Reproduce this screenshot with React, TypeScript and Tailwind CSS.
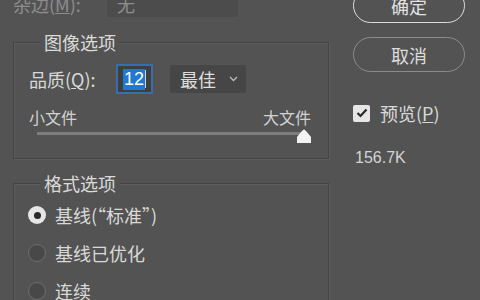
import React from "react";

const font = "font-['Microsoft_YaHei','Noto_Sans_CJK_SC','Noto_Sans',sans-serif]";

function Radio({ checked, label }: { checked?: boolean; label: string }) {
  return (
    <div className="flex items-center h-[20px] shrink-0">
      {checked ? (
        <div className="w-[18px] h-[18px] rounded-full bg-[#e6e6e6] flex items-center justify-center">
          <div className="w-[7px] h-[7px] rounded-full bg-[#2a2a2a]" />
        </div>
      ) : (
        <div className="w-[18px] h-[18px] rounded-full bg-[#484848] border border-[#6e6e6e]" />
      )}
      <span className="ml-[9px] text-[18px] leading-[22px] text-[#d9d9d9]">{label}</span>
    </div>
  );
}

function Group({
  title,
  className,
  children,
}: {
  title: string;
  className: string;
  children: React.ReactNode;
}) {
  return (
    <div
      className={
        "relative shrink-0 ml-[13px] w-[316px] border border-[#444444] shadow-[inset_1px_1px_0_#5c5c5c,1px_1px_0_#5c5c5c] " +
        className
      }
    >
      <div className="absolute left-[26px] top-[-12px] px-[4px] bg-[#535353] text-[18px] leading-[22px] text-[#dadada]">
        {title}
      </div>
      {children}
    </div>
  );
}

export default function App() {
  return (
    <div className={"w-[480px] h-[300px] overflow-hidden bg-[#535353] flex " + font}>
      {/* left column */}
      <div className="w-[340px] flex flex-col shrink-0">
        <div className="mt-[-9px] h-[26px] flex items-center shrink-0">
          <div className="pl-[13px] w-[107px] text-[18px] leading-[22px] text-[#8e8e8e]">
            杂边(<span className="underline">M</span>):
          </div>
          <div className="w-[131px] h-[26px] bg-[#4c4c4c] flex items-center pl-[10px] text-[18px] leading-[22px] text-[#8e8e8e]">
            无
          </div>
        </div>

        <Group title="图像选项" className="mt-[25px] h-[117px] pt-[21px]">
          <div className="flex items-center h-[30px]">
            <div className="pl-[15px] w-[102px] text-[18px] leading-[22px] text-[#d9d9d9]">
              品质(<span className="underline">Q</span>):
            </div>
            <div className="w-[37px] h-[30px] border-2 border-[#3b6ea6] bg-[#3f3f3f] flex items-center pl-[5px]">
              <span className="bg-[#1f78d1] text-white text-[18px] leading-[21px] px-[1px] font-['Liberation_Sans',sans-serif]">
                12
              </span>
              <span className="w-[1px] h-[18px] bg-[#cfcfcf]" />
            </div>
            <div className="ml-[17px] w-[76px] h-[28px] bg-[#464646] flex items-center pl-[10px] pr-[8px] justify-between">
              <span className="text-[18px] leading-[22px] text-[#dedede]">最佳</span>
              <svg width="9" height="6" viewBox="0 0 9 6">
                <path d="M1 1 L4.5 4.5 L8 1" fill="none" stroke="#bdbdbd" strokeWidth="1.3" />
              </svg>
            </div>
          </div>
          <div className="mt-[13px] h-[20px] flex items-center justify-between pl-[15px] pr-[17px] text-[16px] leading-[20px] text-[#d2d2d2]">
            <span>小文件</span>
            <span>大文件</span>
          </div>
          <div className="relative ml-[23px] w-[267px] h-[16px]">
            <div className="absolute left-0 right-0 top-[5px] h-[3px] bg-[#7d7d7d]" />
            <svg
              className="absolute left-[259px] top-[2px]"
              width="16"
              height="15"
              viewBox="0 0 16 15"
            >
              <path d="M1 14 L1 8 Q4 4 7 1 Q8 0 9 1 Q12 4 15 8 L15 14 Z" fill="#f2f2f2" />
            </svg>
          </div>
        </Group>

        <Group title="格式选项" className="mt-[24px] h-[200px] pt-[21px] pl-[14px] flex flex-col gap-[18px]">
          <Radio checked label="基线(“标准”)" />
          <Radio label="基线已优化" />
          <Radio label="连续" />
        </Group>
      </div>

      {/* right column */}
      <div className="ml-[13px] w-[112px] flex flex-col">
        <div className="shrink-0 mt-[-12px] h-[35px] rounded-full border border-[#dcdcdc] flex items-center justify-center text-[18px] leading-[22px] text-[#e2e2e2]">
          确定
        </div>
        <div className="shrink-0 mt-[14px] h-[35px] rounded-full border border-[#8c8c8c] flex items-center justify-center text-[18px] leading-[22px] text-[#dcdcdc]">
          取消
        </div>
        <div className="shrink-0 mt-[30px] flex items-center">
          <div className="w-[17px] h-[17px] rounded-[2px] bg-[#e6e6e6] flex items-center justify-center">
            <svg width="12" height="10" viewBox="0 0 12 10">
              <path d="M1.5 5 L4.5 8 L10.5 1.5" fill="none" stroke="#2a2a2a" strokeWidth="2.2" />
            </svg>
          </div>
          <span className="ml-[10px] text-[18px] leading-[22px] text-[#d9d9d9]">
            预览(<span className="underline">P</span>)
          </span>
        </div>
        <div className="shrink-0 mt-[24px] ml-[2px] text-[16px] leading-[20px] text-[#d4d4d4] font-['Liberation_Sans',sans-serif]">
          156.7K
        </div>
      </div>
    </div>
  );
}
